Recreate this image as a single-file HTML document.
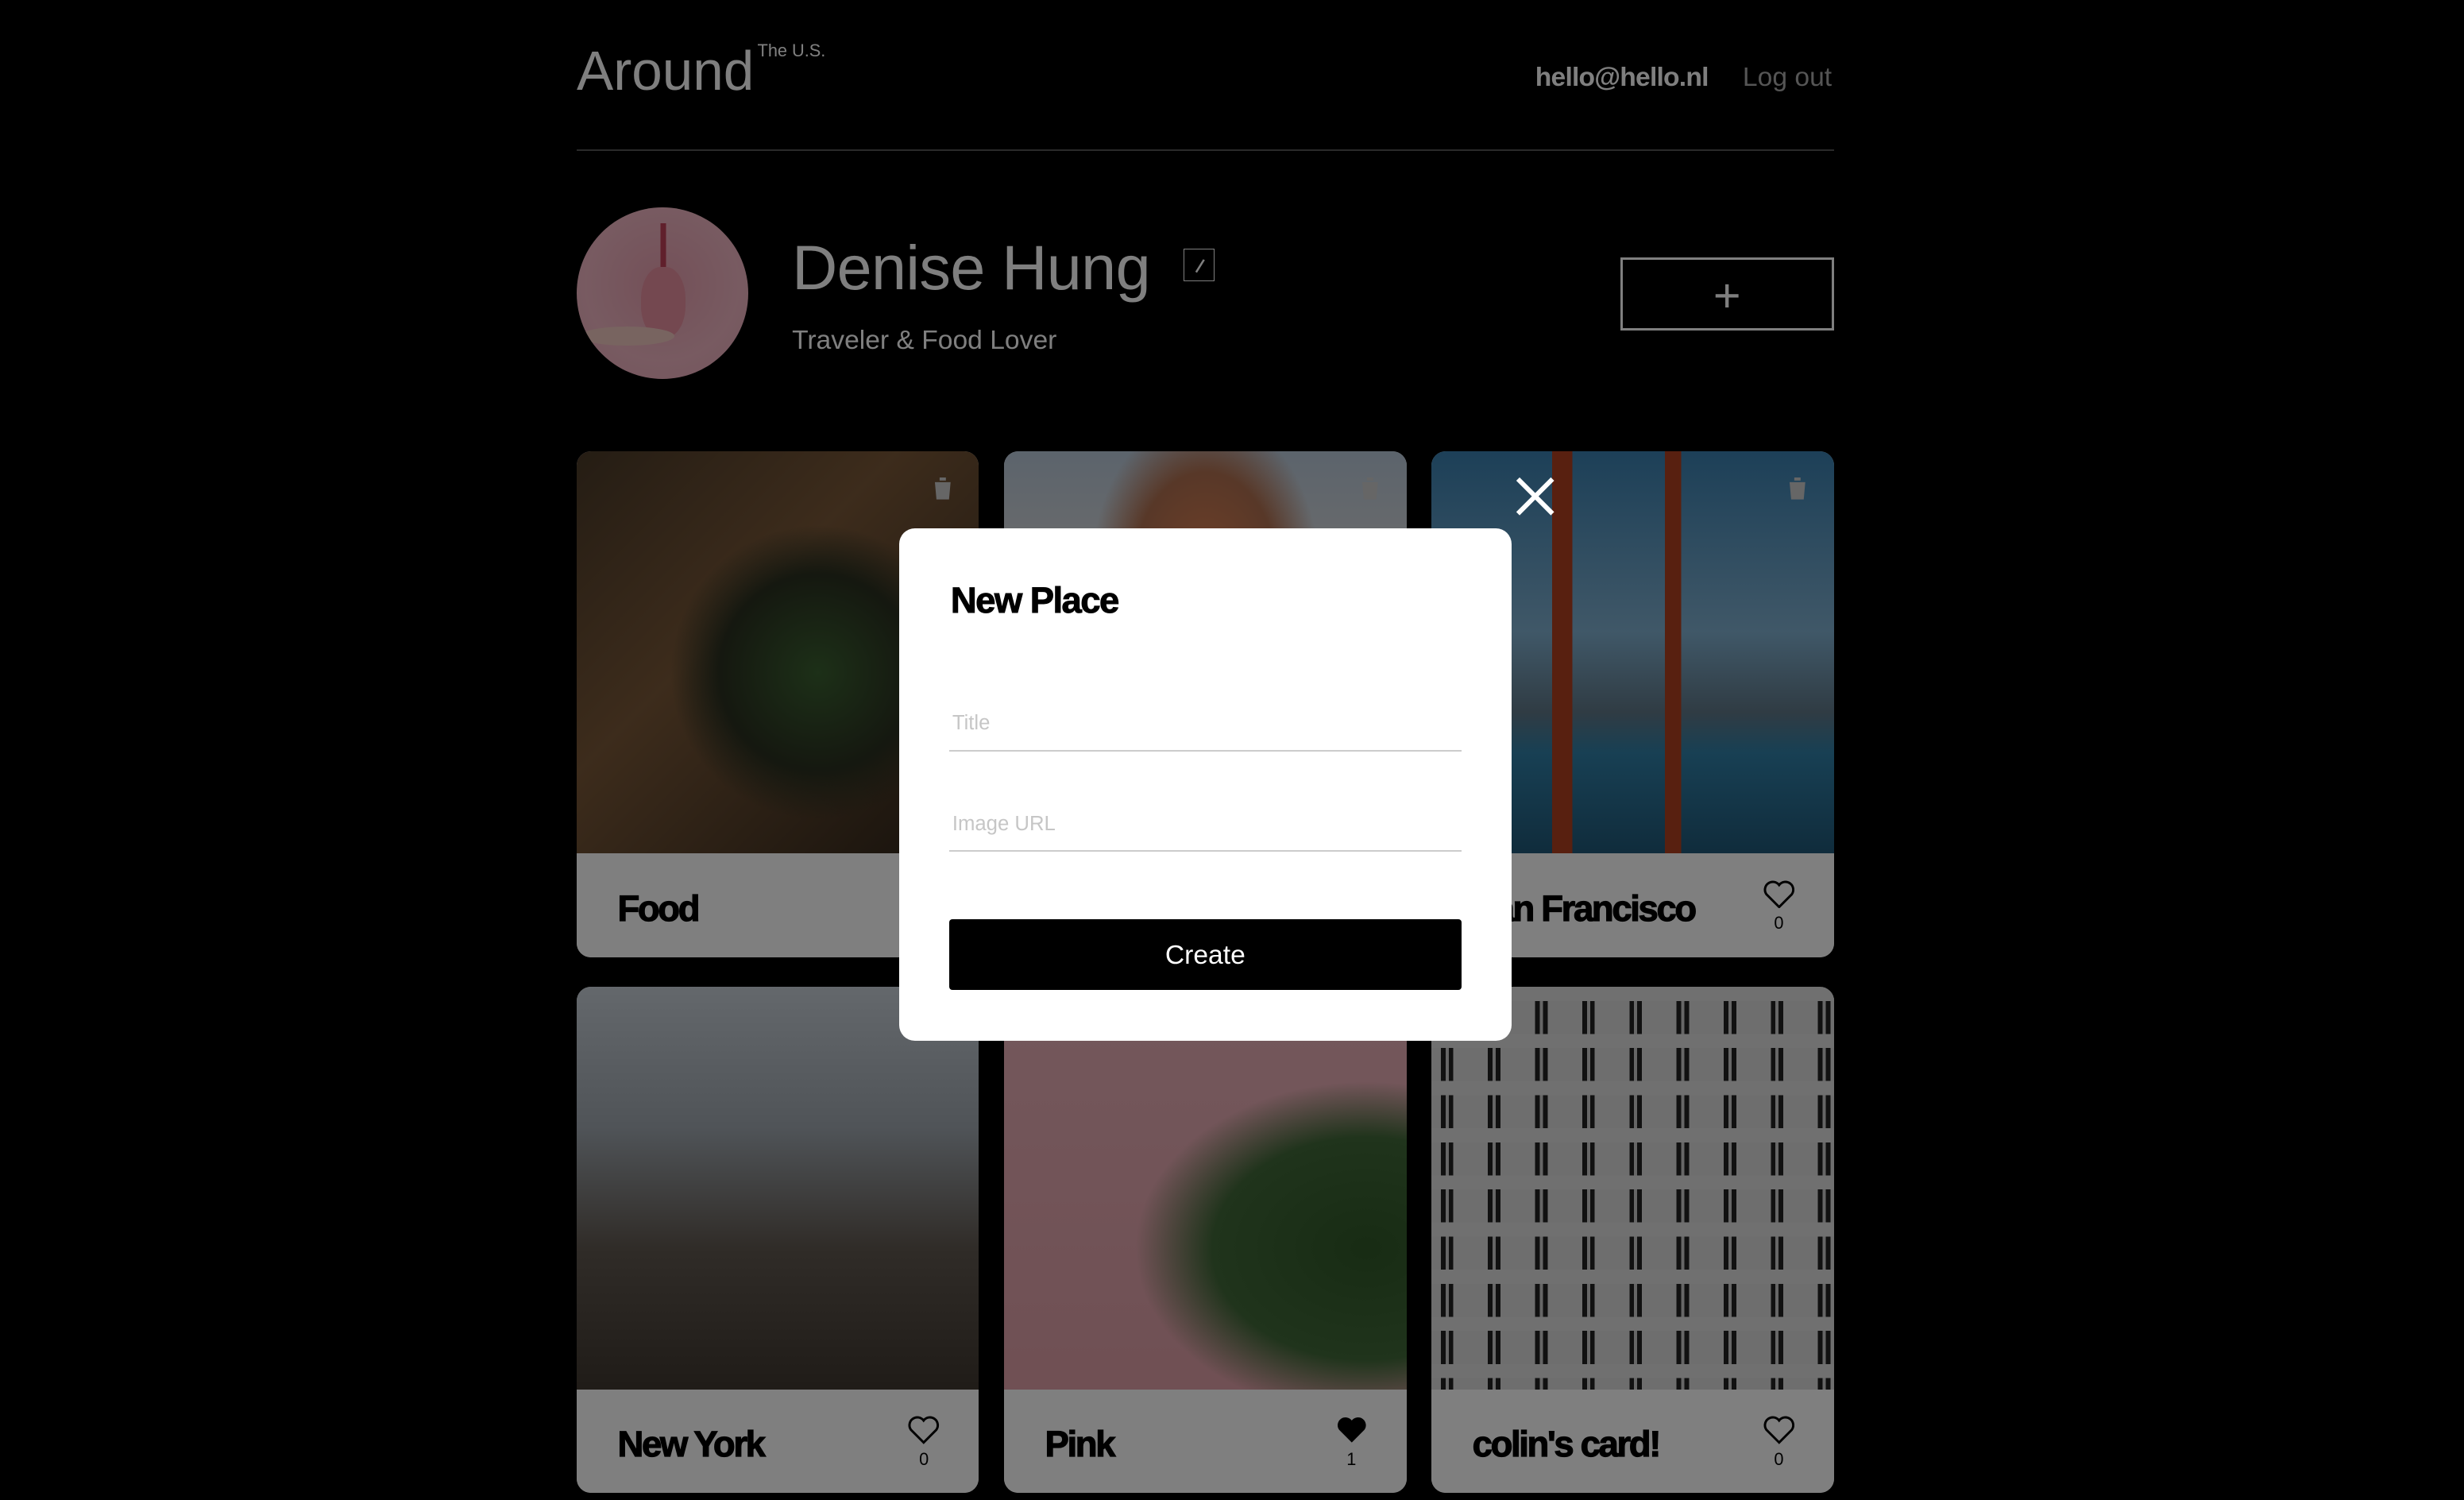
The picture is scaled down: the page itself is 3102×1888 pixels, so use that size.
<!DOCTYPE html>
<html><head><meta charset="utf-8"><style>
html,body{margin:0;padding:0;background:#000;width:3102px;height:1888px;overflow:hidden}
#z{zoom:1.9783;width:1568px;height:954px;position:relative;font-family:"Liberation Sans",sans-serif}
.a{position:absolute}
.card{position:absolute;width:256px;height:322px;border-radius:9px;overflow:hidden;background:#fff}
.img{position:absolute;left:0;top:0;width:256px;height:256px}
.ft{position:absolute;left:0;top:256px;width:256px;height:66px;background:#fff}
.t{position:absolute;left:26px;top:22px;font-weight:900;font-size:23px;letter-spacing:-1.2px;color:#000;-webkit-text-stroke:0.6px #000}
.hz{position:absolute;left:209px;top:17px;width:24px;text-align:center;font-size:11px;color:#000}
.tr{position:absolute;left:226px;top:16px}
.ov{position:absolute;left:0;top:0;width:1568px;height:954px;background:rgba(0,0,0,0.5)}
</style></head><body><div id="z">
<div class="a" style="left:367px;top:25px;font-size:35px;color:#fff">Around</div>
<div class="a" style="left:482px;top:26px;font-size:11px;color:#fff">The U.S.</div>
<div class="a" style="left:977px;top:40px;font-size:17px;font-weight:bold;color:#fff;letter-spacing:-0.4px">hello@hello.nl</div>
<div class="a" style="left:1109px;top:40px;font-size:17px;color:#aaa">Log out</div>
<div class="a" style="left:367px;top:95px;width:800px;height:1px;background:#555"></div>
<div class="a" style="left:367px;top:132px;width:109px;height:109px;border-radius:50%;background:radial-gradient(circle at 50% 45%,#e8a0b0,#f0b6c3 60%,#eaa8b8);overflow:hidden">
 <div class="a" style="left:46px;top:10px;width:18px;height:30px;background:linear-gradient(90deg,transparent 40%,#c04058 40% 60%,transparent 60%)"></div>
 <div class="a" style="left:41px;top:38px;width:28px;height:45px;background:#e890a0;border-radius:45%"></div>
 <div class="a" style="left:2px;top:76px;width:60px;height:12px;background:#f0c8c0;border-radius:50%"></div>
</div>
<div class="a" style="left:504px;top:147px;font-size:40px;color:#fff;letter-spacing:-0.3px">Denise Hung</div>
<div class="a" style="left:753px;top:158px;width:19px;height:20px;border:1px solid #fff"></div>
<svg class="a" style="left:754px;top:159px" width="19" height="20"><path d="M7 14L12 6" stroke="#fff" stroke-width="1.3"/></svg>
<div class="a" style="left:504px;top:207px;font-size:17px;color:#fff">Traveler &amp; Food Lover</div>
<div class="a" style="left:1031px;top:164px;width:133px;height:43px;border:2px solid #fff;color:#fff;font-size:30px;text-align:center;line-height:45px;font-weight:100">+</div>

<div class="card" style="left:367px;top:287px"><div class="img" style="background:radial-gradient(circle at 60% 55%,#3a6030 0,#2a3020 30%,transparent 45%),linear-gradient(135deg,#4a3a28,#7a5838 40%,#2b2218)"></div><svg class="tr" width="14" height="16"><path d="M1 3H13M5 3V1H9V3M2 4H12L11 15H3Z" fill="#ccc"/></svg><div class="ft"><div class="t">Food</div></div></div>
<div class="card" style="left:639px;top:287px"><div class="img" style="background:radial-gradient(ellipse at 50% 30%,#e08050 0,#b07050 25%,transparent 40%),linear-gradient(#b8c8d8,#d8d8d8 30%,#708060)"></div><svg class="tr" width="14" height="16"><path d="M1 3H13M5 3V1H9V3M2 4H12L11 15H3Z" fill="#ccc"/></svg><div class="ft"></div></div>
<div class="card" style="left:911px;top:287px"><div class="img" style="background:linear-gradient(90deg,transparent 30%,#b04020 30% 35%,transparent 35% 58%,#b04020 58% 62%,transparent 62%),linear-gradient(#3a80b0,#80b0d0 45%,#607888 65%,#3080a8 75%,#205878)"></div><svg class="tr" width="14" height="16"><path d="M1 3H13M5 3V1H9V3M2 4H12L11 15H3Z" fill="#ccc"/></svg><div class="ft"><div class="t">San Francisco</div><div class="hz"><svg width="20" height="18" viewBox="0 0 20 18"><path d="M10 17L2 9A4.5 4.5 0 0 1 10 3A4.5 4.5 0 0 1 18 9Z" fill="none" stroke="#000" stroke-width="1.5"/></svg><br>0</div></div></div>
<div class="card" style="left:367px;top:628px"><div class="img" style="background:linear-gradient(#c8d0d8,#a0a8b0 35%,#605850 65%,#403830)"></div><div class="ft"><div class="t">New York</div><div class="hz"><svg width="20" height="18" viewBox="0 0 20 18"><path d="M10 17L2 9A4.5 4.5 0 0 1 10 3A4.5 4.5 0 0 1 18 9Z" fill="none" stroke="#000" stroke-width="1.5"/></svg><br>0</div></div></div>
<div class="card" style="left:639px;top:628px"><div class="img" style="background:radial-gradient(ellipse at 90% 65%,#305828 0,#406838 30%,transparent 45%),linear-gradient(#e8b0b8,#e0a0a8)"></div><div class="ft"><div class="t">Pink</div><div class="hz"><svg width="20" height="18" viewBox="0 0 20 18"><path d="M10 17L2 9A4.5 4.5 0 0 1 10 3A4.5 4.5 0 0 1 18 9Z" fill="#000"/></svg><br>1</div></div></div>
<div class="card" style="left:911px;top:628px"><div class="img" style="background:repeating-linear-gradient(90deg,#ddd 0 6px,#222 6px 9px,#ccc 9px 11px,#222 11px 14px,#ddd 14px 30px),#888"></div><div class="img" style="background:repeating-linear-gradient(#e0e0e0 0 9px,transparent 9px 30px)"></div><div class="ft"><div class="t">colin's card!</div><div class="hz"><svg width="20" height="18" viewBox="0 0 20 18"><path d="M10 17L2 9A4.5 4.5 0 0 1 10 3A4.5 4.5 0 0 1 18 9Z" fill="none" stroke="#000" stroke-width="1.5"/></svg><br>0</div></div></div>

<div class="ov"></div>
<svg class="a" style="left:964px;top:303px" width="26" height="26"><path d="M2 2L24 24M24 2L2 24" stroke="#fff" stroke-width="3"/></svg>
<div class="a" style="left:572px;top:336px;width:390px;height:326px;background:#fff;border-radius:10px">
<div class="a" style="left:33px;top:33px;font-size:23px;font-weight:900;letter-spacing:-0.8px;color:#000;-webkit-text-stroke:0.5px #000">New Place</div>
<div class="a" style="left:34px;top:117px;font-size:13px;color:#c6c6c6">Title</div>
<div class="a" style="left:32px;top:141px;width:326px;height:1px;background:#ccc"></div>
<div class="a" style="left:34px;top:181px;font-size:13px;color:#c6c6c6">Image URL</div>
<div class="a" style="left:32px;top:205px;width:326px;height:1px;background:#ccc"></div>
<div class="a" style="left:32px;top:249px;width:326px;height:45px;background:#000;border-radius:2px;color:#fff;font-size:17px;text-align:center;line-height:46px">Create</div>
</div>
</div></body></html>
